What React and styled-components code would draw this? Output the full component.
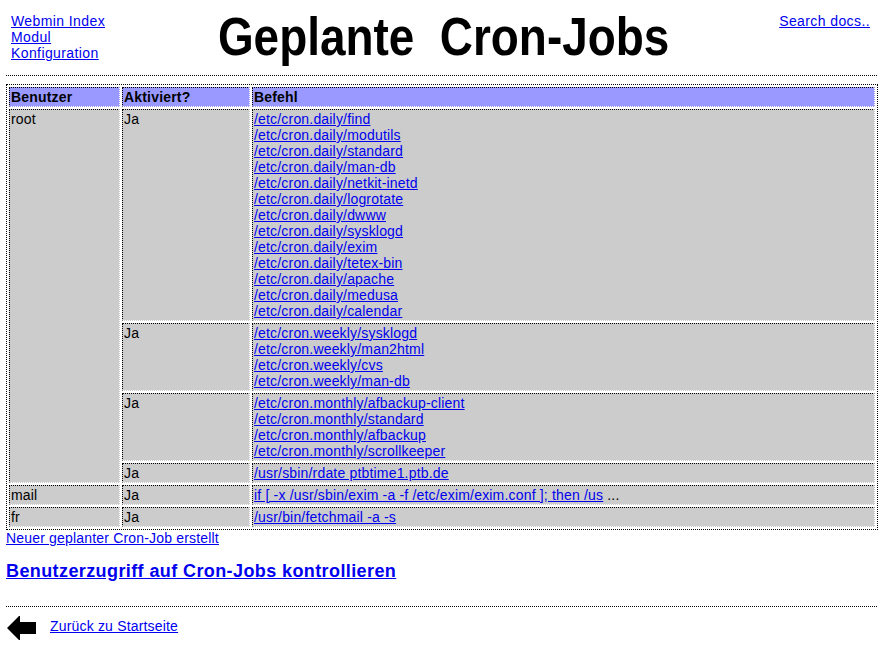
import React from 'react';
import styled, { createGlobalStyle } from 'styled-components';

const GlobalStyle = createGlobalStyle`
  * { box-sizing: border-box; }
  html, body {
    margin: 0;
    padding: 0;
    background: #fff;
  }
  body {
    font-family: "Liberation Sans", Arial, Helvetica, sans-serif;
    font-size: 14px;
    line-height: 16px;
    letter-spacing: 0.18px;
    color: #000;
  }
  a { color: #0000ee; }
`;

const jobs = [
  {
    user: 'root',
    groups: [
      [
        '/etc/cron.daily/find',
        '/etc/cron.daily/modutils',
        '/etc/cron.daily/standard',
        '/etc/cron.daily/man-db',
        '/etc/cron.daily/netkit-inetd',
        '/etc/cron.daily/logrotate',
        '/etc/cron.daily/dwww',
        '/etc/cron.daily/sysklogd',
        '/etc/cron.daily/exim',
        '/etc/cron.daily/tetex-bin',
        '/etc/cron.daily/apache',
        '/etc/cron.daily/medusa',
        '/etc/cron.daily/calendar',
      ],
      [
        '/etc/cron.weekly/sysklogd',
        '/etc/cron.weekly/man2html',
        '/etc/cron.weekly/cvs',
        '/etc/cron.weekly/man-db',
      ],
      [
        '/etc/cron.monthly/afbackup-client',
        '/etc/cron.monthly/standard',
        '/etc/cron.monthly/afbackup',
        '/etc/cron.monthly/scrollkeeper',
      ],
      ['/usr/sbin/rdate ptbtime1.ptb.de'],
    ],
  },
  {
    user: 'mail',
    groups: [['if [ -x /usr/sbin/exim -a -f /etc/exim/exim.conf ]; then /us']],
    truncated: true,
  },
  {
    user: 'fr',
    groups: [['/usr/bin/fetchmail -a -s']],
  },
];

const Page = styled.div`
  width: 888px;
  padding: 6px;
`;

const Header = styled.div`
  display: grid;
  grid-template-columns: 1fr auto 1fr;
  align-items: start;
  padding-top: 4px;
`;

const NavLinks = styled.div`
  display: flex;
  flex-direction: column;
  align-items: flex-start;
  padding: 3px 0 0 5px;
  letter-spacing: 0.4px;
`;

const Title = styled.h1`
  margin: 0;
  font-size: 53px;
  line-height: 53px;
  font-weight: bold;
  letter-spacing: 0;
  white-space: pre;
  transform: scaleX(0.866);
`;

const SearchLink = styled.a`
  justify-self: end;
  padding: 3px 12px 0 0;
  letter-spacing: 0.4px;
`;

const Divider = styled.div`
  width: 871px;
  border-top: 1px dotted #000;
  margin: ${(p) => p.$margin};
`;

const CronTable = styled.table`
  width: 872px;
  border: 1px dotted #000;
  border-collapse: separate;
  border-spacing: 2px;
  font-size: 14px;
  line-height: 16px;
`;

const cell = `
  border: 1px dotted;
  border-color: #000 #fff #fff #000;
  padding: 1px 1px;
  vertical-align: top;
  text-align: left;
`;

const HeadCell = styled.th`
  ${cell}
  width: ${(p) => p.$width || 'auto'};
  background: #9999ff;
  font-weight: bold;
`;

const Cell = styled.td`
  ${cell}
  background: #cccccc;
`;

const Ellipsis = styled.span`
  color: #000;
`;

const Footer = styled.div`
  display: flex;
  flex-direction: column;
  align-items: flex-start;
`;

const AccessLink = styled.a`
  margin-top: 15px;
  font-size: 18px;
  line-height: 21px;
  font-weight: bold;
  letter-spacing: 0.4px;
`;

const BackRow = styled.div`
  display: flex;
  align-items: flex-start;
  gap: 13px;
  padding-left: 1px;
`;

const BackLink = styled.a`
  margin-top: 2px;
`;

const BackArrow = () => (
  <svg width="30" height="24" viewBox="0 0 30 24">
    <polygon points="0,12 12,0 13,0 13,6 29,6 29,18 13,18 13,24 12,24" fill="#000" />
  </svg>
);

const Commands = ({ lines, truncated }) => (
  <>
    {lines.map((line, i) => (
      <div key={i}>
        <a href="#">{line}</a>
        {truncated && <Ellipsis> ...</Ellipsis>}
      </div>
    ))}
  </>
);

export default function App() {
  return (
    <>
      <GlobalStyle />
      <Page>
        <Header>
          <NavLinks>
            <a href="#">Webmin Index</a>
            <a href="#">Modul</a>
            <a href="#">Konfiguration</a>
          </NavLinks>
          <Title>{'Geplante  Cron-Jobs'}</Title>
          <SearchLink href="#">Search docs..</SearchLink>
        </Header>

        <Divider $margin="12px 0 8px" />

        <CronTable>
          <thead>
            <tr>
              <HeadCell $width="111px">Benutzer</HeadCell>
              <HeadCell $width="128px">Aktiviert?</HeadCell>
              <HeadCell>Befehl</HeadCell>
            </tr>
          </thead>
          <tbody>
            {jobs.map((job) =>
              job.groups.map((lines, gi) => (
                <tr key={job.user + gi}>
                  {gi === 0 && <Cell rowSpan={job.groups.length}>{job.user}</Cell>}
                  <Cell>Ja</Cell>
                  <Cell>
                    <Commands lines={lines} truncated={job.truncated} />
                  </Cell>
                </tr>
              ))
            )}
          </tbody>
        </CronTable>

        <Footer>
          <a href="#">Neuer geplanter Cron-Job erstellt</a>
          <AccessLink href="#">Benutzerzugriff auf Cron-Jobs kontrollieren</AccessLink>
        </Footer>

        <Divider $margin="24px 0 9px" />

        <BackRow>
          <a href="#"><BackArrow /></a>
          <BackLink href="#">Zurück zu Startseite</BackLink>
        </BackRow>
      </Page>
    </>
  );
}
